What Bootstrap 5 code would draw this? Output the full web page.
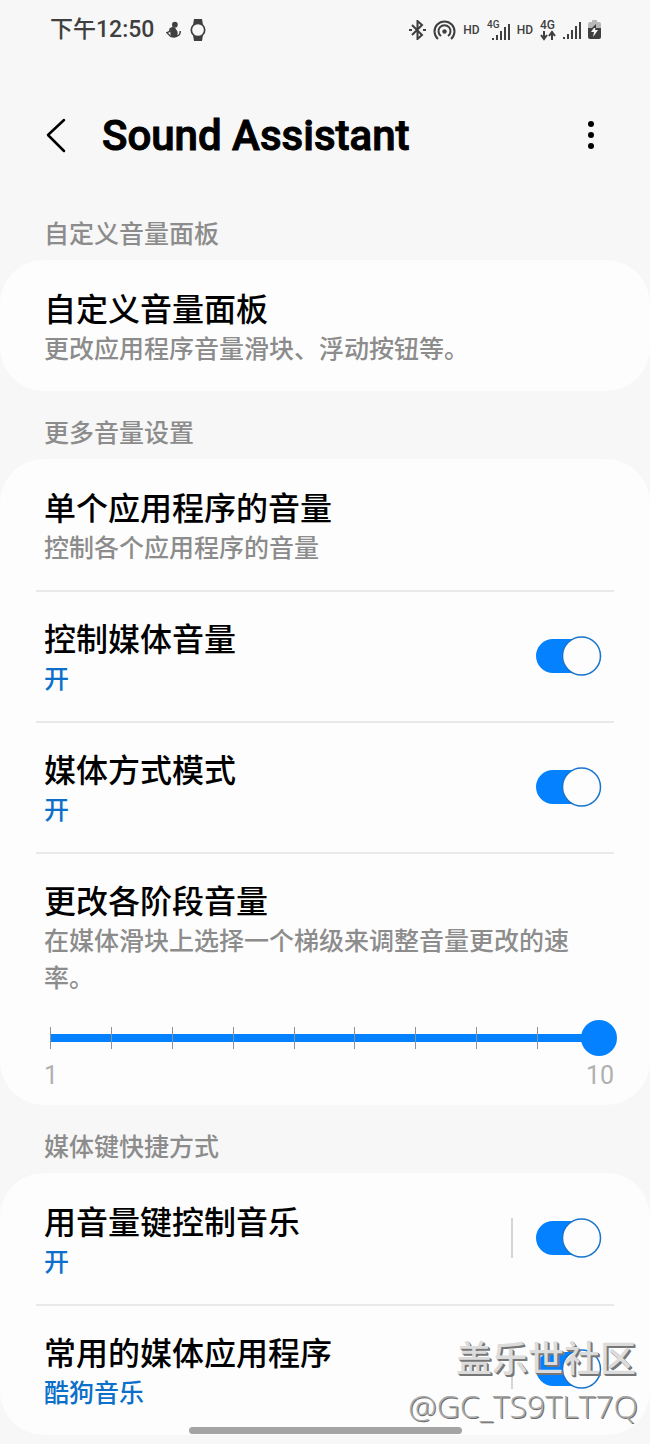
<!DOCTYPE html>
<html lang="zh-CN">
<head>
<meta charset="utf-8">
<meta name="viewport" content="width=device-width, initial-scale=1">
<title>Sound Assistant</title>
<link href="https://cdn.jsdelivr.net/npm/bootstrap@5.3.0/dist/css/bootstrap.min.css" rel="stylesheet">
<style>
  body { background: #f7f7f7; color: #000; font-family: Roboto, "Noto Sans CJK SC", sans-serif; }
  .screen { min-height: 100vh; }
  .status { height: 60px; padding: 0 49px 0 50px; color: #3f3f3f; font-size: 23px; line-height: 32px; font-weight: 500; }
  .status-icons { gap: 7px; }
  .status-hd { font-size: 12px; line-height: 16px; font-weight: 500; }
  .appbar { height: 132px; padding: 20px 44px 0; }
  .appbar h1 { font-size: 42px; line-height: 48px; font-weight: 500; -webkit-text-stroke: 1px #000; padding-left: 10px; }
  .appbar .btn { line-height: 0; }
  .section-name { padding: 25px 44px 0; height: 68px; font-size: 25px; line-height: 36px; color: #8c8c8c; font-weight: 500; }
  .panel { background: #fdfdfd; border-radius: 44px; padding: 0 36px; }
  .setting { padding: 28px 8px 0; min-height: 131px; border-top: 2px solid #e9e9e9; }
  .setting:first-child { border-top-color: transparent; }
  .setting-title { font-size: 32px; line-height: 40px; font-weight: 500; }
  .setting-note { font-size: 25px; line-height: 37px; margin-top: 1px; color: #8c8c8c; font-weight: 500; }
  .setting-note.active { color: #0c6fca; }
  .setting-toggle { min-height: 72px; padding: 0 4px 0 0; }
  .setting-toggle.split { border-left: 2px solid #d6d6d6; height: 40px; min-height: 0; padding-left: 23px; margin-top: 15px; }
  .form-switch .toggle, .form-switch .toggle:focus { width: 66px; height: 40px; margin: 0; border: 0; border-radius: 0; background-color: transparent; background-size: 66px 40px; background-position: center; box-shadow: none;
    background-image: url("data:image/svg+xml,%3Csvg xmlns='http://www.w3.org/2000/svg' viewBox='0 0 66 40'%3E%3Crect y='3' width='63' height='34' rx='17' fill='%23999'/%3E%3Ccircle cx='20' cy='20' r='19' fill='%23fdfdfd' stroke='%23888' stroke-width='1.5'/%3E%3C/svg%3E"); }
  .form-switch .toggle:checked { background-color: transparent; background-position: center;
    background-image: url("data:image/svg+xml,%3Csvg xmlns='http://www.w3.org/2000/svg' viewBox='0 0 66 40'%3E%3Crect y='3' width='60' height='34' rx='17' fill='%230381fe'/%3E%3Ccircle cx='45.500' cy='20' r='19' fill='%23fdfdfd' stroke='%231674cd' stroke-width='1.500'/%3E%3C/svg%3E"); }
  .slider { margin: 23px -11px 0 -12px; height: 36px; }
  .slider .form-range { height: 36px; display: block; }
  .form-range::-webkit-slider-runnable-track { height: 8px; border-radius: 0; background: linear-gradient(to right, transparent 18px, #0381fe 18px, #0381fe calc(100% - 18px), transparent calc(100% - 18px)); }
  .form-range::-webkit-slider-thumb { width: 36px; height: 36px; margin-top: -14px; border-radius: 50%; background: #0381fe; }
  .ticks { top: 7px; left: 18px; right: 18px; height: 22px; pointer-events: none; }
  .ticks span { width: 1px; background: #8c9299; }
  .ticks span:last-child { visibility: hidden; }
  .scale { font-size: 25px; line-height: 32px; color: #b0b0b0; padding-bottom: 13px; margin: 4px -8px 0 0; }
  .home-bar { left: 29%; right: 29%; bottom: 10px; height: 7px; background: #a4a4a4; }
  .stamp { right: 12px; bottom: 15px; color: #dcdcdc; text-shadow: 1px 1px 0 #777, 2px 2px 0 #777; pointer-events: none; }
  .stamp-name { font-size: 36px; line-height: 46px; font-weight: 500; padding-right: 2px; }
  .stamp-user { font-family: "Open Sans", sans-serif; font-size: 32px; line-height: 46px; font-weight: 300; color: #a8a8a8; text-shadow: 1px 1px 0 #6c6c6c; }
</style>
</head>
<body>
<div class="screen position-relative pb-2">
  <header class="status d-flex align-items-center justify-content-between">
    <div class="d-flex align-items-center gap-2">
      <span>下午12:50</span>
      <svg class="ms-1" width="16" height="20" viewBox="0 0 18 20" fill="#3f3f3f"><circle cx="10" cy="4" r="3.200"/><path d="m8 6 2 3-4 1-3 2 1-4Z"/><path d="M10 7Q6 8 5 12Q4 18 9 18Q14 18 13 12Z"/><path d="M6 11 1 13l4 4q6 2 9-1 2-1 2-5" fill="none" stroke="#3f3f3f" stroke-width="1.600"/></svg>
      <svg width="16" height="24" viewBox="0 0 16 24" fill="#3f3f3f"><path d="M4 1h8l1 6H3ZM3 17h10l-1 6H4Z"/><circle cx="8" cy="12" r="6.700" fill="#f7f7f7" stroke="#3f3f3f" stroke-width="1.700"/></svg>
    </div>
    <div class="status-icons d-flex align-items-center">
      <svg width="17" height="20" viewBox="0 0 17 20" fill="none" stroke="#3f3f3f" stroke-width="2"><path d="m3 5 10 10-4.500 4V1L13 5 3 15M0 10h3m11 0h3"/></svg>
      <svg width="23" height="20" viewBox="0 0 23 20" fill="none" stroke="#3f3f3f" stroke-width="2"><path d="M5 19A10 10 0 1 1 18 19M8 16A6 6 0 1 1 15 16"/><circle cx="11.500" cy="11.500" r="2.200" fill="#3f3f3f" stroke="none"/></svg>
      <span class="status-hd">HD</span>
      <svg width="23" height="22" viewBox="0 0 23 22"><text x="0" y="9" font-size="10" font-weight="500" fill="#3f3f3f">4G</text><path d="M6 19v2M10 16v5M14 12v9M18 8v13M22 5v16" stroke="#3f3f3f" stroke-width="2"/></svg>
      <span class="status-hd">HD</span>
      <svg width="16" height="22" viewBox="0 0 16 22"><text x="0" y="10" font-size="12" font-weight="500" fill="#3f3f3f">4G</text><path d="M4 12v7M1 16l3 4 3-4M12 21v-7M9 17l3-4 3 4" fill="none" stroke="#3f3f3f" stroke-width="2"/></svg>
      <svg width="18" height="20" viewBox="0 0 18 20"><path d="M1 17v2M5 14v5M9 10v9M13 6v13M17 2v17" stroke="#3f3f3f" stroke-width="2"/></svg>
      <svg width="13" height="20" viewBox="0 0 13 20"><path d="M4 0h5v2h2q2 0 2 2v6H0V4q0-2 2-2h2Z" fill="#b8b8b8"/><path d="M0 8h13v9q0 2-2 2H2q-2 0-2-2Z" fill="#3f3f3f"/><path d="m8 5-5 7h3l-1 5 5-7H7Z" fill="#f7f7f7"/><path d="m8 4-4 4h4Z" fill="#3f3f3f"/></svg>
    </div>
  </header>

  <nav class="appbar d-flex align-items-center" aria-label="Sound Assistant">
    <button type="button" class="btn p-0 border-0" aria-label="返回"><svg width="24" height="36" viewBox="0 0 24 36" fill="none" stroke="#000" stroke-width="2.500" stroke-linecap="round" stroke-linejoin="round"><path d="M20 2 4 17l16 16"/></svg></button>
    <h1 class="mb-0 ms-4 flex-grow-1">Sound Assistant</h1>
    <button type="button" class="btn p-0 border-0" aria-label="更多选项"><svg width="30" height="36" viewBox="0 0 30 36"><circle cx="15" cy="6" r="3"/><circle cx="15" cy="17" r="3"/><circle cx="15" cy="28" r="3"/></svg></button>
  </nav>

  <main>
    <h2 class="section-name mb-0">自定义音量面板</h2>
    <section class="panel">
      <div class="setting">
        <div class="setting-title">自定义音量面板</div>
        <div class="setting-note">更改应用程序音量滑块、浮动按钮等。</div>
      </div>
    </section>

    <h2 class="section-name mb-0">更多音量设置</h2>
    <section class="panel">
      <div class="setting">
        <div class="setting-title">单个应用程序的音量</div>
        <div class="setting-note">控制各个应用程序的音量</div>
      </div>
      <div class="setting d-flex justify-content-between align-items-start">
        <label for="media-volume"><span class="setting-title d-block">控制媒体音量</span><span class="setting-note active d-block">开</span></label>
        <div class="form-switch setting-toggle d-flex align-items-center"><input class="form-check-input toggle" type="checkbox" role="switch" id="media-volume" checked></div>
      </div>
      <div class="setting d-flex justify-content-between align-items-start">
        <label for="media-mode"><span class="setting-title d-block">媒体方式模式</span><span class="setting-note active d-block">开</span></label>
        <div class="form-switch setting-toggle d-flex align-items-center"><input class="form-check-input toggle" type="checkbox" role="switch" id="media-mode" checked></div>
      </div>
      <div class="setting">
        <label for="step" class="setting-title d-block">更改各阶段音量</label>
        <div class="setting-note">在媒体滑块上选择一个梯级来调整音量更改的速率。</div>
        <div class="slider position-relative">
          <input type="range" class="form-range" id="step" min="1" max="10" value="10">
          <div class="ticks position-absolute d-flex justify-content-between"><span></span><span></span><span></span><span></span><span></span><span></span><span></span><span></span><span></span><span></span></div>
        </div>
        <div class="scale d-flex justify-content-between"><span>1</span><span>10</span></div>
      </div>
    </section>

    <h2 class="section-name mb-0">媒体键快捷方式</h2>
    <section class="panel">
      <div class="setting d-flex justify-content-between align-items-start">
        <label for="volume-keys"><span class="setting-title d-block">用音量键控制音乐</span><span class="setting-note active d-block">开</span></label>
        <div class="form-switch setting-toggle split d-flex align-items-center"><input class="form-check-input toggle" type="checkbox" role="switch" id="volume-keys" checked></div>
      </div>
      <div class="setting d-flex justify-content-between align-items-start">
        <label for="media-app"><span class="setting-title d-block">常用的媒体应用程序</span><span class="setting-note active d-block">酷狗音乐</span></label>
        <div class="form-switch setting-toggle split d-flex align-items-center"><input class="form-check-input toggle" type="checkbox" role="switch" id="media-app" checked></div>
      </div>
    </section>
  </main>

  <div class="home-bar position-absolute rounded-pill"></div>
  <div class="stamp position-absolute text-end">
    <div class="stamp-name">盖乐世社区</div>
    <div class="stamp-user">@GC_TS9TLT7Q</div>
  </div>
</div>
<script src="https://cdn.jsdelivr.net/npm/bootstrap@5.3.0/dist/js/bootstrap.bundle.min.js"></script>
</body>
</html>
